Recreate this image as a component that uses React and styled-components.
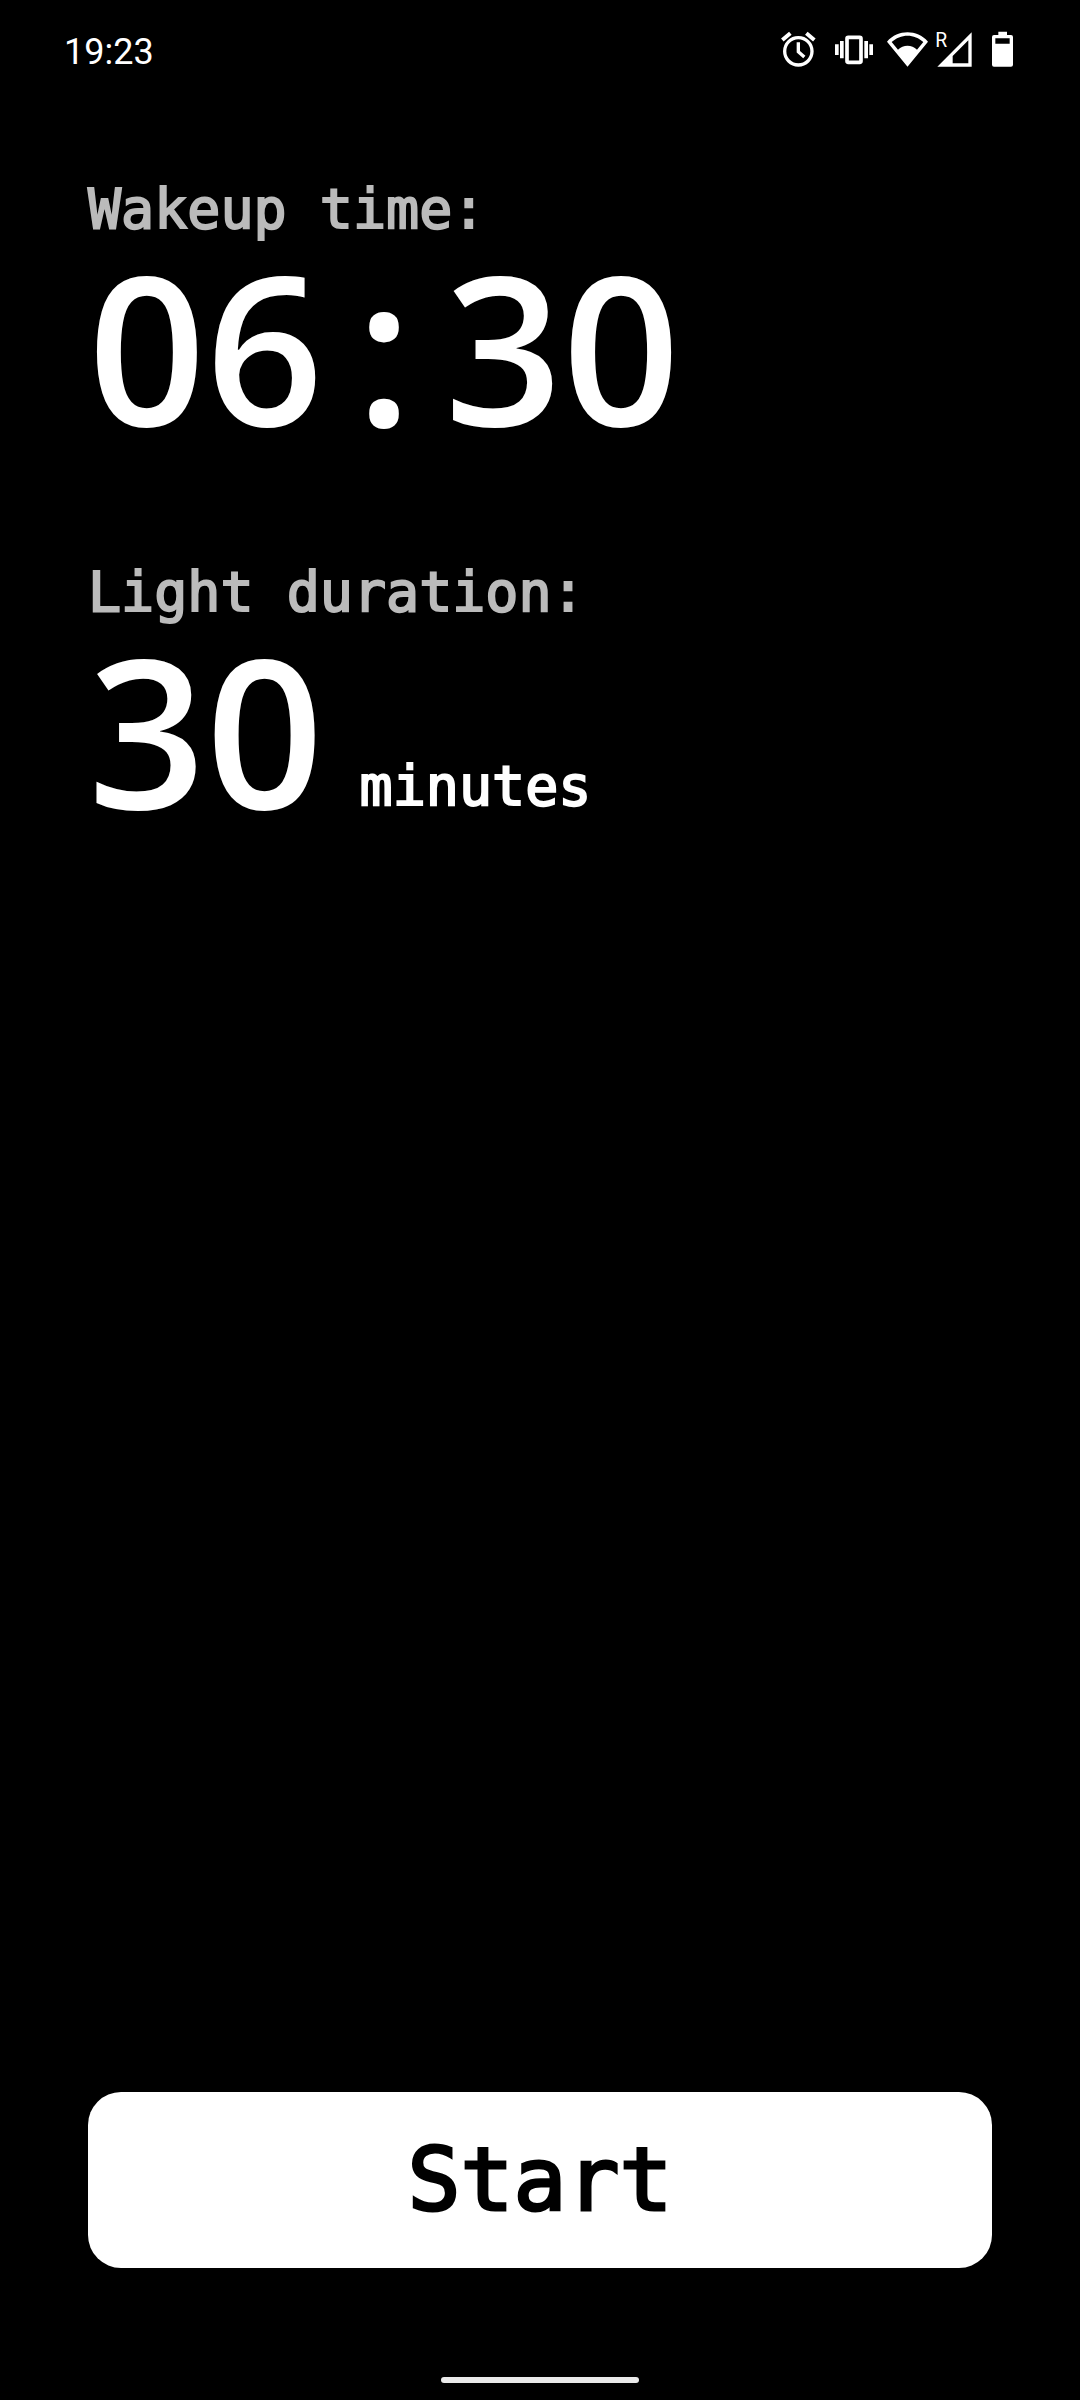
import React from "react";
import styled, { createGlobalStyle } from "styled-components";

const GlobalStyle = createGlobalStyle`
  *, *::before, *::after { box-sizing: border-box; }
  body { margin: 0; background: #000; }
  button { appearance: none; border: 0; padding: 0; cursor: pointer; }
`;

const mono = `"DejaVu Sans Mono", monospace`;

const Screen = styled.div`
  min-height: 100vh;
  display: flex;
  flex-direction: column;
  background: #000;
  color: #fff;
`;

const StatusBar = styled.header`
  display: flex;
  align-items: flex-end;
  justify-content: space-between;
  padding: 30px 64px 0;
  height: 68px;
`;

const Clock = styled.time`
  font: 400 36px/32px Roboto, sans-serif;
`;

const StatusIcons = styled.div`
  display: flex;
  gap: 6px;
`;

const Icon = styled.svg`
  display: block;
  height: 38px;
  width: ${({ $width }) => $width}px;
  fill: none;
  stroke: none;
`;

const Settings = styled.main`
  flex: 1;
  display: flex;
  flex-direction: column;
  gap: 109px;
  padding: 109px 88px 0;
`;

const Setting = styled.section`
  display: flex;
  flex-direction: column;
  align-items: flex-start;
`;

const Label = styled.span`
  font: 400 55px/64px ${mono};
  color: #bbb;
  -webkit-text-stroke: 2px #bbb;
`;

const Value = styled.button`
  display: flex;
  align-items: flex-end;
  background: none;
  color: #fff;
  font: 600 206px/210px "Open Sans", sans-serif;
`;

const Colon = styled.span`
  width: 121px;
  text-align: center;
`;

const Unit = styled.span`
  padding: 0 0 16px 36px;
  font: 400 55px/64px ${mono};
  -webkit-text-stroke: 2px #fff;
`;

const Footer = styled.footer`
  display: flex;
  flex-direction: column;
  align-items: center;
  padding: 0 88px 17px;
`;

const StartButton = styled.button`
  width: 100%;
  height: 176px;
  border-radius: 33px;
  background: #fff;
  color: #000;
  font: 400 88px/104px ${mono};
  -webkit-text-stroke: 3px #000;
`;

const HomeBar = styled.div`
  width: 198px;
  height: 6px;
  margin-top: 109px;
  border-radius: 3px;
  background: #eaeaea;
`;

const AlarmIcon = () => (
  <Icon $width={43} viewBox="30 30 129 114" aria-label="Alarm set">
    <g stroke="#fff" strokeWidth="10">
      <circle cx="85" cy="94" r="41" />
      <path d="M85 67v28l18 16" />
      <path d="M37 60l24-20M109 40l24 20" strokeWidth="12" />
    </g>
  </Icon>
);

const VibrateIcon = () => (
  <Icon $width={48} viewBox="177 30 144 114" aria-label="Vibrate">
    <rect x="231" y="52" width="42" height="75" rx="4" stroke="#fff" strokeWidth="11" />
    <path fill="#fff" d="M195 73h11v32h-11zM210 63h11v52h-11zM283 63h11v52h-11zM298 73h11v32h-11z" />
  </Icon>
);

const WifiIcon = () => (
  <Icon $width={47} viewBox="39 30 141 114" aria-label="Wi-Fi">
    <path
      fill="#fff"
      fillRule="evenodd"
      d="M112.500 140L51 65C68 46 90 37 112.500 37S157 46 174 65zM65 66L84 89C92 81 102 77 112.500 77S133 81 141 89L160 66C147 54 130 47 112.500 47S78 54 65 66z"
    />
  </Icon>
);

const SignalIcon = () => (
  <Icon $width={44} viewBox="198 30 132 114" aria-label="Mobile signal, roaming">
    <text x="196" y="80" fill="#fff" fontFamily="Roboto, sans-serif" fontSize="58">R</text>
    <path fill="#fff" fillRule="evenodd" d="M202 140L305 37V140zM248 108V130H295V61z" />
  </Icon>
);

const BatteryIcon = () => (
  <Icon $width={30} viewBox="348 30 90 114" aria-label="Battery">
    <path
      fill="#fff"
      fillRule="evenodd"
      d="M385 35h26v10h12a6 6 0 0 1 6 6v83a6 6 0 0 1-6 6h-51a6 6 0 0 1-6-6V51a6 6 0 0 1 6-6h13zM376 55v16h43V55z"
    />
  </Icon>
);

export default function App() {
  return (
    <Screen>
      <GlobalStyle />
      <StatusBar>
        <Clock>19:23</Clock>
        <StatusIcons>
          <AlarmIcon />
          <VibrateIcon />
          <WifiIcon />
          <SignalIcon />
          <BatteryIcon />
        </StatusIcons>
      </StatusBar>
      <Settings>
        <Setting>
          <Label id="wakeup-label">Wakeup time:</Label>
          <Value type="button" aria-describedby="wakeup-label">
            06<Colon>:</Colon>30
          </Value>
        </Setting>
        <Setting>
          <Label id="duration-label">Light duration:</Label>
          <Value type="button" aria-describedby="duration-label">
            30<Unit>minutes</Unit>
          </Value>
        </Setting>
      </Settings>
      <Footer>
        <StartButton type="button">Start</StartButton>
        <HomeBar />
      </Footer>
    </Screen>
  );
}
